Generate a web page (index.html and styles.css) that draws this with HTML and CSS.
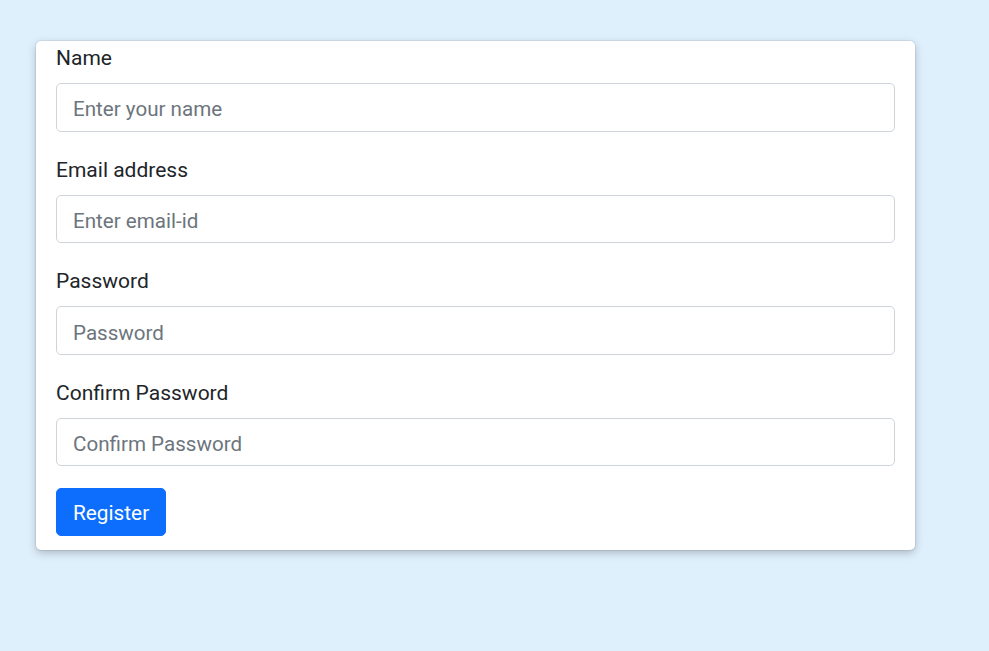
FILE: index.html
```html
<!DOCTYPE html>
<html lang="en">
<head>
<meta charset="utf-8">
<title>Register</title>
<link rel="stylesheet" href="styles.css">
</head>
<body>
<main class="page">
  <form class="card">
    <div class="group">
      <label class="label" for="name">Name</label>
      <input class="field" id="name" type="text" placeholder="Enter your name">
    </div>
    <div class="group">
      <label class="label" for="email">Email address</label>
      <input class="field" id="email" type="email" placeholder="Enter email-id">
    </div>
    <div class="group">
      <label class="label" for="pw">Password</label>
      <input class="field" id="pw" type="password" placeholder="Password">
    </div>
    <div class="group">
      <label class="label" for="cpw">Confirm Password</label>
      <input class="field" id="cpw" type="password" placeholder="Confirm Password">
    </div>
    <button class="btn" type="button">Register</button>
  </form>
</main>
</body>
</html>
```
FILE: styles.css
```css
html, body {
  margin: 0;
  padding: 0;
}
body {
  background: #dff0fd;
  font-family: Roboto, "Liberation Sans", sans-serif;
  color: #212529;
  min-height: 651px;
}
.page {
  padding: 41px 0 0 36px;
}
.card {
  box-sizing: border-box;
  width: 879px;
  background: #fff;
  border-radius: 5px;
  box-shadow: 0 0 0 1px rgba(0, 0, 0, 0.06), 0 3px 8px rgba(0, 0, 0, 0.24);
  padding: 1px 20px 13.6px 20px;
  display: flex;
  flex-direction: column;
  align-items: flex-start;
}
.group {
  width: 100%;
  display: flex;
  flex-direction: column;
  margin-bottom: 22px;
}
.group:last-of-type {
  margin-bottom: 21.4px;
}
.label {
  font-size: 21px;
  line-height: 31.5px;
  padding-top: 1px;
  margin-bottom: 8.7px;
}
.field {
  box-sizing: border-box;
  width: 100%;
  height: 48.4px;
  padding: 10px 16px 6px 16px;
  font-family: inherit;
  font-size: 20.6px;
  line-height: 31px;
  color: #212529;
  border: 1px solid #ced4da;
  border-radius: 5px;
  background: #fff;
  outline: none;
}
.field::placeholder {
  color: #6c757d;
  opacity: 1;
}
.btn {
  box-sizing: border-box;
  height: 48.4px;
  padding: 9px 16px 5px 16px;
  font-family: inherit;
  font-size: 20.8px;
  line-height: 31px;
  color: #fff;
  background: #0d6efd;
  border: 1px solid #0d6efd;
  border-radius: 5px;
}
```
